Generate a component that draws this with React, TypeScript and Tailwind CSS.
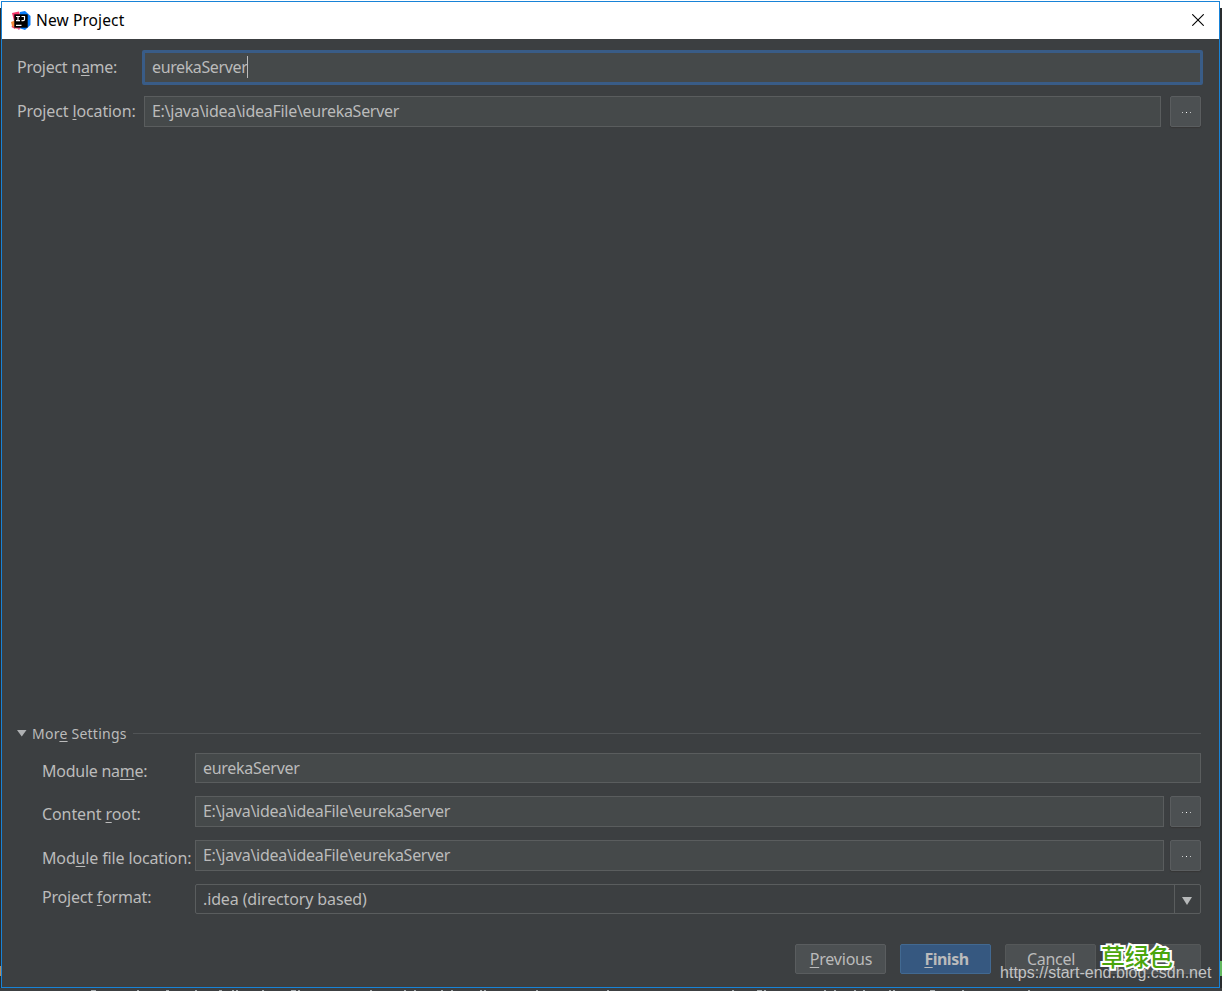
import type { ReactNode } from "react";

function Key({ children }: { children: ReactNode }) {
  return (
    <span className="underline decoration-1 underline-offset-[2px] [text-decoration-skip-ink:none]">
      {children}
    </span>
  );
}

function Logo() {
  return (
    <svg width="20" height="20" viewBox="0 0 20 20" className="shrink-0">
      <path d="M1 2 L8 0.5 L11 10 L4 18 L0.5 16 L3 10 Z" fill="#f5366b" />
      <path d="M0 11 L5 9 L6 18 L1 15 Z" fill="#f98b3d" />
      <path d="M9 1 L14 0 L19.5 5 L19.5 14 L14 19 L8 17 Z" fill="#087cfa" />
      <path d="M3 15 L8 19 L11 15 L4 14 Z" fill="#e8508a" />
      <rect x="3.3" y="3.3" width="13.4" height="13.4" fill="#000" />
      <path
        d="M5 5.5h4M7 5.5v4.2M5 9.7h4M10.5 5.5h3v3q0 1.2-1.4 1.2h-1.6M5 14.3h5.5"
        stroke="#fff"
        strokeWidth="1.2"
        fill="none"
      />
    </svg>
  );
}

function Field({ children, className }: { children: ReactNode; className: string }) {
  return (
    <div
      className={`flex items-center border border-[#5a5d5e] bg-[#45494a] pb-px pl-[7px] tracking-[-0.28px] ${className}`}
    >
      {children}
    </div>
  );
}

function Browse() {
  return (
    <button className="flex h-[31px] w-[31px] shrink-0 items-center justify-center gap-[3px] rounded-[2px] border border-[#5a5d5f] bg-[#4c5052] pl-[2px] pt-[2px] shadow-[0_1px_1px_#363636]">
      <i className="size-px bg-[#c4c6c7]" />
      <i className="size-px bg-white" />
      <i className="size-px bg-[#c4c6c7]" />
    </button>
  );
}

const ticks = [
  [91, 5], [137, 2], [166, 3], [195, 2], [219, 3], [232, 2], [236, 2], [262, 2], [291, 5], [298, 2], [370, 2],
  [404, 2], [414, 2], [441, 2], [451, 2], [480, 2], [484, 2], [536, 2], [607, 2], [732, 2], [757, 5], [764, 2],
  [824, 2], [834, 2], [854, 2], [863, 2], [889, 2], [893, 2], [930, 5], [962, 2], [1028, 2],
];

export default function App() {
  return (
    <div className="relative h-[991px] w-[1222px] overflow-hidden bg-white pt-px font-['Noto_Sans','Noto_Sans_CJK_SC',sans-serif] text-[16px] leading-[22px] text-[#bbbbbb]">
      <div className="absolute inset-x-0 top-[8px] bottom-0 bg-[#292c2e]" />
      <div className="absolute inset-x-0 bottom-0 h-[3px] bg-[#3c3f41]" />
      <div className="absolute left-0 top-[966px] h-[10px] w-px bg-[#b68a5c]" />
      <div className="absolute right-0 top-[961px] h-[15px] w-[2px] bg-[#62b75e]" />
      <svg className="absolute bottom-0 left-0" width="1222" height="1">
        {ticks.map(([x, w]) => (
          <rect key={x} x={x} y="0" width={w} height="1" fill="#a6abad" />
        ))}
      </svg>

      <main className="relative ml-px flex h-[987px] w-[1219px] flex-col border border-[#1883d7] bg-[#3c3f41]">
        <header className="flex h-[37px] shrink-0 items-center bg-white pl-[9px] pr-[15px] text-black">
          <Logo />
          <h1 className="mb-[2px] ml-[5px] text-[15.5px] tracking-[0.12px]">New Project</h1>
          <svg className="mb-px ml-auto" width="12" height="12" viewBox="0 0 12 12">
            <path d="M.3.3l11.4 11.4M11.7.3L.3 11.7" stroke="#000" strokeWidth="1.1" />
          </svg>
        </header>

        <section className="flex flex-col pl-[15px] pt-[11px]">
          <div className="flex h-[35px] items-center">
            <label className="w-[125px] pb-px tracking-[-0.27px]">
              Project n<Key>a</Key>me:
            </label>
            <div className="flex h-[35px] w-[1061px] items-center rounded-[2px] border-[3px] border-[#395c87] bg-[#45494a] pb-px pl-[7px] tracking-[-0.38px]">
              eurekaServer
              <span className="h-[22px] w-px bg-[#bbbbbb]" />
            </div>
          </div>
          <div className="mt-[11px] flex h-[31px] items-center">
            <label className="w-[127px] whitespace-nowrap pb-px tracking-[-0.12px]">
              Project <Key>l</Key>ocation:
            </label>
            <Field className="h-[31px] w-[1017px]">E:\java\idea\ideaFile\eurekaServer</Field>
            <div className="ml-[9px]">
              <Browse />
            </div>
          </div>
        </section>

        <section className="mt-auto flex flex-col pl-[15px] pr-[18px]">
          <div className="flex h-[22px] items-center">
            <svg className="mb-[2px]" width="10" height="7" viewBox="0 0 10 7">
              <path d="M0 0h9.5L4.75 6.5z" fill="#afb1b3" />
            </svg>
            <h2 className="ml-[5px] w-[101px] text-[14px] tracking-[0.25px]">
              Mor<Key>e</Key> Settings
            </h2>
            <div className="mb-[2px] h-px flex-1 bg-[#515456]" />
          </div>

          <div className="mt-[8px] flex h-[30px] pl-[25px]">
            <label className="w-[153px] pt-[7px] tracking-[-0.25px]">
              Module na<Key>m</Key>e:
            </label>
            <Field className="h-[30px] w-[1006px]">eurekaServer</Field>
          </div>
          <div className="mt-[13px] flex h-[31px] pl-[25px]">
            <label className="w-[153px] pt-[7px] tracking-[-0.1px]">
              Content <Key>r</Key>oot:
            </label>
            <Field className="h-[31px] w-[969px]">E:\java\idea\ideaFile\eurekaServer</Field>
            <div className="ml-[6px]">
              <Browse />
            </div>
          </div>
          <div className="mt-[13px] flex h-[31px] pl-[25px]">
            <label className="w-[153px] whitespace-nowrap pt-[7px] tracking-[-0.15px]">
              Mod<Key>u</Key>le file location:
            </label>
            <Field className="h-[31px] w-[969px] pb-[3px]">E:\java\idea\ideaFile\eurekaServer</Field>
            <div className="ml-[6px]">
              <Browse />
            </div>
          </div>
          <div className="mt-[13px] flex h-[30px] pl-[25px]">
            <label className="w-[153px] pt-[2px] tracking-[-0.2px]">
              Project <Key>f</Key>ormat:
            </label>
            <div className="flex h-[30px] w-[1006px] rounded-[2px] border border-[#5a5d5e]">
              <span className="flex flex-1 items-center pl-[7px] tracking-[-0.13px]">.idea (directory based)</span>
              <span className="flex w-[26px] items-center justify-center border-l border-[#5a5d5e] pr-px pt-[3px]">
                <svg width="10" height="8" viewBox="0 0 10 8">
                  <path d="M0 0h10L5 8z" fill="#b6b8b9" />
                </svg>
              </span>
            </div>
          </div>
        </section>

        <footer className="mb-[12px] mt-[30px] flex h-[31px] shrink-0 justify-end gap-[14px] pr-[18px]">
          <button className="h-[30px] w-[91px] rounded-[2px] border border-[#5a5d5f] bg-[#4c5052] pl-px tracking-[-0.2px]">
            <Key>P</Key>revious
          </button>
          <button className="h-[30px] w-[91px] rounded-[2px] border border-[#426991] bg-[#365880] pl-[2px] font-bold tracking-[-0.5px]">
            <Key>F</Key>inish
          </button>
          <button className="h-[30px] w-[91px] rounded-[2px] border border-[#555859] bg-[#4c5052] pl-px tracking-[-0.3px]">
            Cancel
          </button>
          <button className="h-[30px] w-[91px] rounded-[2px] border border-[#555859] bg-[#4c5052]" />
        </footer>
      </main>

      <div className="absolute left-[1000px] top-[963px] whitespace-nowrap font-['Liberation_Sans',sans-serif] text-[16px] leading-[20px] tracking-[0.02px] text-[#c3c4c5]">
        https://start-end.blog.csdn.net
      </div>
      <div className="absolute left-[1101px] top-[938px] whitespace-nowrap font-['Noto_Sans_CJK_SC',sans-serif] text-[24px] font-medium leading-[36px] text-[#4aa50b] [-webkit-text-stroke:4px_white] [paint-order:stroke_fill]">
        草绿色
      </div>
    </div>
  );
}
